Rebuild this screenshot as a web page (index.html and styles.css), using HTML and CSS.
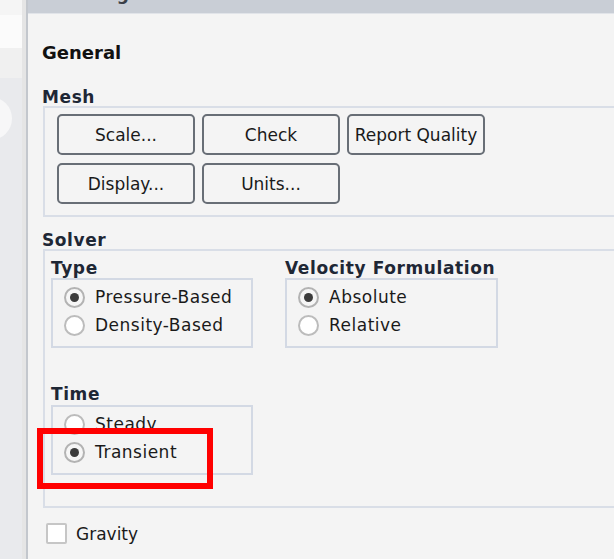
FILE: index.html
```html
<!DOCTYPE html>
<html lang="en">
<head>
    <meta charset="UTF-8">
    <meta name="viewport" content="width=device-width, initial-scale=1.0">
    <title>Task Page - General</title>
    <link rel="stylesheet" href="styles.css">
</head>
<body>
    <div class="app">
        <aside class="side">
            <div class="side-a"></div>
            <div class="side-b"></div>
            <div class="side-c"></div>
            <div class="side-d"><span class="side-knob"></span></div>
        </aside>
        <div class="divider"></div>
        <main class="panel">
            <div class="panel-title"><span>Task Page</span></div>
            <div class="panel-body">
                <h2 class="page-title">General</h2>

                <section class="mesh">
                    <h3 class="group-label">Mesh</h3>
                    <div class="group-box mesh-box">
                        <button type="button" class="btn">Scale...</button>
                        <button type="button" class="btn">Check</button>
                        <button type="button" class="btn">Report Quality</button>
                        <button type="button" class="btn">Display...</button>
                        <button type="button" class="btn">Units...</button>
                    </div>
                </section>

                <section class="solver">
                    <h3 class="group-label">Solver</h3>
                    <div class="group-box solver-box">
                        <div class="solver-row">
                            <div class="col-type">
                                <h4 class="group-label">Type</h4>
                                <div class="option-box">
                                    <label class="option"><span class="radio checked"></span>Pressure-Based</label>
                                    <label class="option"><span class="radio"></span>Density-Based</label>
                                </div>
                            </div>
                            <div class="col-velocity">
                                <h4 class="group-label">Velocity Formulation</h4>
                                <div class="option-box">
                                    <label class="option"><span class="radio checked"></span>Absolute</label>
                                    <label class="option"><span class="radio"></span>Relative</label>
                                </div>
                            </div>
                        </div>
                        <div class="col-type time">
                            <h4 class="group-label">Time</h4>
                            <div class="option-box">
                                <label class="option"><span class="radio"></span>Steady</label>
                                <label class="option"><span class="radio checked"></span>Transient</label>
                            </div>
                        </div>
                    </div>
                </section>

                <label class="gravity"><span class="checkbox"></span>Gravity</label>
            </div>
        </main>
        <div class="callout"></div>
    </div>
</body>
</html>
```

FILE: styles.css
```css
* {
    box-sizing: border-box;
}
body {
    margin: 0;
    font-family: 'DejaVu Sans', sans-serif;
    background: #f4f4f4;
    color: #1a1a1a;
}
.app {
    display: flex;
    height: 559px;
    overflow: hidden;
    position: relative;
}
.side {
    width: 22px;
    display: flex;
    flex-direction: column;
    background: #e9eaed;
}
.side-a {
    height: 15px;
    background: #f5f5f5;
}
.side-b {
    height: 33px;
    background: #fbfbfb;
}
.side-c {
    height: 30px;
    background: #f0f0f0;
}
.side-d {
    flex: 1;
    overflow: hidden;
}
.side-knob {
    display: block;
    width: 43px;
    height: 43px;
    margin: 19px 0 0 -31px;
    border-radius: 50%;
    background: #f7f7f8;
}
.divider {
    width: 6px;
    border-left: 4px solid #e5e5e5;
    background: #c3c7cd;
}
.panel {
    flex: 1;
    min-width: 0;
    overflow: hidden;
    background: #f4f4f4;
}
.panel-title {
    height: 14px;
    background: #c9ced6;
    border-bottom: 1px solid #e1e4e9;
    overflow: hidden;
    padding-left: 17px;
}
.panel-title span {
    display: block;
    font-size: 17px;
    font-weight: bold;
    line-height: 18px;
    margin-top: -15px;
    color: #3a3f47;
}
.panel-body {
    padding: 28px 0 0 14px;
}
.page-title {
    margin: 0;
    font-size: 18px;
    line-height: 22px;
    font-weight: bold;
    color: #111;
}
.group-label {
    margin: 0;
    font-size: 17px;
    line-height: 18px;
    font-weight: bold;
    letter-spacing: 0.6px;
    color: #1e2735;
    white-space: nowrap;
}
.group-box {
    border: 2px solid #d9dee7;
    margin-left: 1px;
    margin-right: -20px;
}
.mesh {
    margin-top: 24px;
}
.mesh-box {
    display: grid;
    grid-template-columns: repeat(3, 138px);
    gap: 8px 7px;
    padding: 6px 0 11px 12px;
}
.btn {
    height: 41px;
    padding: 0;
    border: 2px solid #686e76;
    border-radius: 5px;
    background: #f4f4f4;
    font-family: inherit;
    font-size: 17px;
    color: #1a1a1a;
    white-space: nowrap;
}
.solver {
    margin-top: 14px;
}
.solver-box {
    padding: 8px 0 31px 6px;
}
.solver-row {
    display: flex;
    gap: 32px;
}
.col-type {
    width: 202px;
}
.col-velocity {
    width: 213px;
}
.time {
    margin-top: 37px;
}
.option-box {
    margin-top: 1px;
    border: 2px solid #d3d9e4;
    padding: 3px 11px 7px;
}
.time .option-box {
    margin-top: 2px;
}
.option {
    display: flex;
    align-items: center;
    gap: 10px;
    height: 28px;
    font-size: 17px;
    letter-spacing: 0.5px;
    white-space: nowrap;
}
.radio {
    position: relative;
    flex: none;
    width: 21px;
    height: 21px;
    border: 2px solid #bcbcbc;
    border-radius: 50%;
    background: #fff;
}
.radio.checked {
    border-color: #b3b3b3;
    background: #f6f6f6;
}
.radio.checked::after {
    content: '';
    position: absolute;
    left: 4px;
    top: 4px;
    width: 9px;
    height: 9px;
    border-radius: 50%;
    background: #3c3c3c;
}
.gravity {
    display: flex;
    align-items: center;
    gap: 9px;
    height: 21px;
    margin: 15px 0 0 4px;
    font-size: 17px;
}
.checkbox {
    width: 21px;
    height: 21px;
    border: 2px solid #c6c6c6;
    border-radius: 2px;
    background: #fff;
}
.callout {
    position: absolute;
    left: 37px;
    top: 428px;
    width: 176px;
    height: 61px;
    border: 6px solid #ff0000;
}
```
